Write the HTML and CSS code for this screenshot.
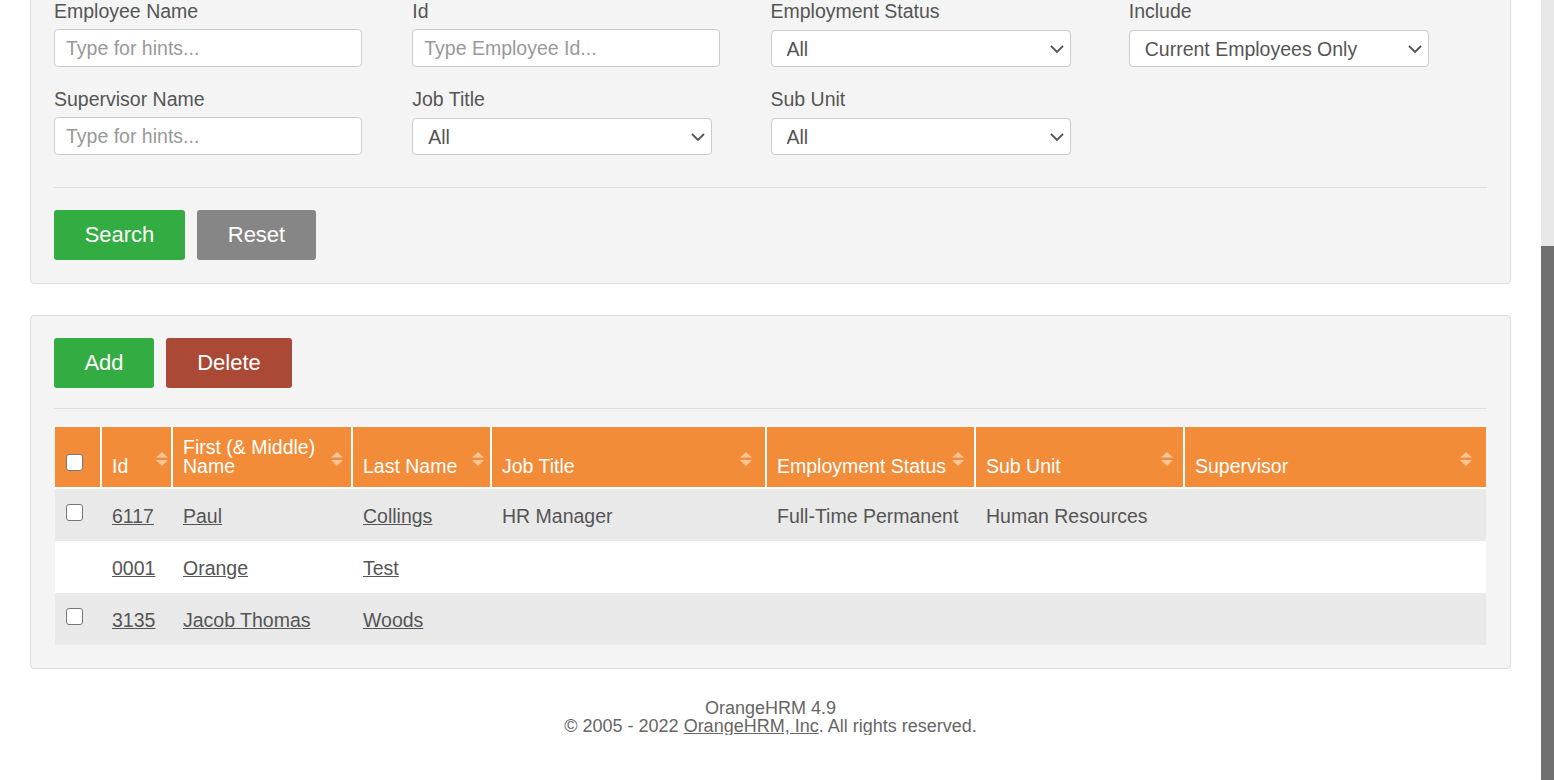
FILE: index.html
```html
<!DOCTYPE html>
<html lang="en">
<head>
<meta charset="utf-8">
<title>Employee List</title>
<link rel="stylesheet" href="styles.css">
</head>
<body>
<div class="page">
  <section class="panel panel-search">
    <div class="filters">
      <div class="field">
        <label class="field-label">Employee Name</label>
        <input class="text-input" type="text" placeholder="Type for hints...">
      </div>
      <div class="field">
        <label class="field-label">Id</label>
        <input class="text-input" type="text" placeholder="Type Employee Id...">
      </div>
      <div class="field">
        <label class="field-label">Employment Status</label>
        <div class="select-wrap">
          <select class="select"><option>All</option></select>
          <svg class="chevron" width="14" height="8" viewBox="0 0 14 8"><path d="M1 1 L7 7 L13 1" fill="none" stroke="#555" stroke-width="1.8"/></svg>
        </div>
      </div>
      <div class="field">
        <label class="field-label">Include</label>
        <div class="select-wrap">
          <select class="select"><option>Current Employees Only</option></select>
          <svg class="chevron" width="14" height="8" viewBox="0 0 14 8"><path d="M1 1 L7 7 L13 1" fill="none" stroke="#555" stroke-width="1.8"/></svg>
        </div>
      </div>
      <div class="field">
        <label class="field-label">Supervisor Name</label>
        <input class="text-input" type="text" placeholder="Type for hints...">
      </div>
      <div class="field">
        <label class="field-label">Job Title</label>
        <div class="select-wrap">
          <select class="select"><option>All</option></select>
          <svg class="chevron" width="14" height="8" viewBox="0 0 14 8"><path d="M1 1 L7 7 L13 1" fill="none" stroke="#555" stroke-width="1.8"/></svg>
        </div>
      </div>
      <div class="field">
        <label class="field-label">Sub Unit</label>
        <div class="select-wrap">
          <select class="select"><option>All</option></select>
          <svg class="chevron" width="14" height="8" viewBox="0 0 14 8"><path d="M1 1 L7 7 L13 1" fill="none" stroke="#555" stroke-width="1.8"/></svg>
        </div>
      </div>
    </div>
    <hr class="divider divider-search">
    <div class="actions">
      <button class="btn btn-green btn-search">Search</button>
      <button class="btn btn-gray btn-reset">Reset</button>
    </div>
  </section>

  <section class="panel panel-list">
    <div class="actions">
      <button class="btn btn-green btn-add">Add</button>
      <button class="btn btn-red btn-delete">Delete</button>
    </div>
    <hr class="divider divider-list">
    <table class="grid">
      <colgroup>
        <col class="c-check"><col class="c-id"><col class="c-first"><col class="c-last"><col class="c-job"><col class="c-status"><col class="c-sub"><col class="c-sup">
      </colgroup>
      <thead>
        <tr>
          <th class="th-check"><input class="check check-head" type="checkbox"></th>
          <th>Id<svg class="sort" width="12" height="14" viewBox="0 0 12 14"><polygon points="0,5.5 6,0 12,5.5"/><polygon points="0,8 12,8 6,14"/></svg></th>
          <th>First (&amp; Middle)<br>Name<svg class="sort" width="12" height="14" viewBox="0 0 12 14"><polygon points="0,5.5 6,0 12,5.5"/><polygon points="0,8 12,8 6,14"/></svg></th>
          <th>Last Name<svg class="sort" width="12" height="14" viewBox="0 0 12 14"><polygon points="0,5.5 6,0 12,5.5"/><polygon points="0,8 12,8 6,14"/></svg></th>
          <th>Job Title<svg class="sort" width="12" height="14" viewBox="0 0 12 14"><polygon points="0,5.5 6,0 12,5.5"/><polygon points="0,8 12,8 6,14"/></svg></th>
          <th>Employment Status<svg class="sort" width="12" height="14" viewBox="0 0 12 14"><polygon points="0,5.5 6,0 12,5.5"/><polygon points="0,8 12,8 6,14"/></svg></th>
          <th>Sub Unit<svg class="sort" width="12" height="14" viewBox="0 0 12 14"><polygon points="0,5.5 6,0 12,5.5"/><polygon points="0,8 12,8 6,14"/></svg></th>
          <th>Supervisor<svg class="sort" width="12" height="14" viewBox="0 0 12 14"><polygon points="0,5.5 6,0 12,5.5"/><polygon points="0,8 12,8 6,14"/></svg></th>
        </tr>
      </thead>
      <tbody>
        <tr>
          <td class="td-check"><input class="check check-row" type="checkbox"></td>
          <td><a href="#">6117</a></td>
          <td><a href="#">Paul</a></td>
          <td><a href="#">Collings</a></td>
          <td>HR Manager</td>
          <td>Full-Time Permanent</td>
          <td>Human Resources</td>
          <td></td>
        </tr>
        <tr>
          <td class="td-check"></td>
          <td><a href="#">0001</a></td>
          <td><a href="#">Orange</a></td>
          <td><a href="#">Test</a></td>
          <td></td>
          <td></td>
          <td></td>
          <td></td>
        </tr>
        <tr>
          <td class="td-check"><input class="check check-row" type="checkbox"></td>
          <td><a href="#">3135</a></td>
          <td><a href="#">Jacob Thomas</a></td>
          <td><a href="#">Woods</a></td>
          <td></td>
          <td></td>
          <td></td>
          <td></td>
        </tr>
      </tbody>
    </table>
  </section>

  <footer class="footer">
    <div>OrangeHRM 4.9</div>
    <div>&copy; 2005 - 2022 <a href="#">OrangeHRM, Inc</a>. All rights reserved.</div>
  </footer>
</div>
<div class="scrollbar"><div class="scroll-thumb"></div></div>
</body>
</html>
```

FILE: styles.css
```css
html {
  overflow: hidden;
}
body {
  margin: 0;
  background: #ffffff;
  font-family: "Liberation Sans", Arial, sans-serif;
  font-size: 19.5px;
  color: #555555;
}
.page {
  width: 1541px;
  box-sizing: border-box;
  padding: 0 30px;
}
.panel {
  background: #f4f4f4;
  border: 1px solid #dedede;
  border-radius: 4px;
  padding: 23px;
}
.panel-search {
  margin-top: -24px;
}
.panel-list {
  margin-top: 31px;
  padding-top: 22px;
  padding-bottom: 23px;
}
.filters {
  display: grid;
  grid-template-columns: repeat(4, 1fr);
  row-gap: 21px;
}
.field {
  display: flex;
  flex-direction: column;
  align-items: flex-start;
}
.field-label {
  display: block;
  line-height: 22px;
  margin-bottom: 7px;
  color: #555555;
}
.text-input {
  box-sizing: border-box;
  width: 308px;
  height: 38px;
  margin: 0;
  border: 1px solid #cccccc;
  border-radius: 4px;
  padding: 0 11px;
  background: #ffffff;
  font-family: inherit;
  font-size: 19.5px;
  color: #555555;
}
.text-input::placeholder {
  color: #999999;
}
.select-wrap {
  position: relative;
  width: 300px;
  margin-top: 1px;
}
.select {
  -webkit-appearance: none;
  appearance: none;
  box-sizing: border-box;
  width: 300px;
  height: 37px;
  margin: 0;
  border: 1px solid #cccccc;
  border-radius: 4px;
  padding: 0 30px 0 15px;
  background: #ffffff;
  font-family: inherit;
  font-size: 19.5px;
  color: #555555;
}
.chevron {
  position: absolute;
  right: 7px;
  top: 15px;
  pointer-events: none;
}
.divider {
  border: 0;
  border-top: 1px solid #dedede;
  margin: 0;
}
.divider-search {
  margin-top: 32px;
  margin-bottom: 22px;
}
.divider-list {
  margin-top: 20px;
  margin-bottom: 18px;
}
.actions {
  display: flex;
  gap: 12px;
}
.btn {
  height: 50px;
  padding: 0;
  border: 0;
  border-radius: 3px;
  color: #ffffff;
  font-family: inherit;
  font-size: 22px;
  text-align: center;
  cursor: pointer;
}
.btn-search { width: 131px; }
.btn-reset { width: 119px; }
.btn-add { width: 100px; }
.btn-delete { width: 126px; }
.btn-green {
  background: #33ac41;
}
.btn-gray {
  background: #868686;
}
.btn-red {
  background: #aa4935;
}
.grid {
  table-layout: fixed;
  width: 1431px;
  margin-left: 1px;
  border-collapse: separate;
  border-spacing: 0;
}
.c-check { width: 47px; }
.c-id { width: 71px; }
.c-first { width: 180px; }
.c-last { width: 139px; }
.c-job { width: 275px; }
.c-status { width: 209px; }
.c-sub { width: 209px; }
.c-sup { width: 301px; }
.grid th {
  position: relative;
  background: #f28c38;
  color: #ffffff;
  font-weight: normal;
  text-align: left;
  vertical-align: bottom;
  line-height: 19px;
  padding: 11px 10px;
  border-right: 2px solid #ffffff;
  border-bottom: 2px solid #ffffff;
  white-space: nowrap;
}
.grid th:last-child {
  border-right: 0;
}
.grid .th-check {
  padding-left: 11px;
}
.sort {
  position: absolute;
  top: 25px;
  left: calc((100% - 12px) * 0.95);
  fill: rgba(255, 255, 255, 0.5);
}
.grid td {
  vertical-align: top;
  line-height: 27px;
  padding: 14px 10px 11px;
  color: #555555;
  white-space: nowrap;
}
.grid tbody tr:nth-child(odd) td {
  background: #e9e9e9;
}
.grid tbody tr:nth-child(even) td {
  background: #ffffff;
}
.grid .td-check {
  padding-left: 11px;
}
.grid a {
  color: #555555;
  text-decoration: underline;
}
.check {
  -webkit-appearance: none;
  appearance: none;
  display: block;
  box-sizing: border-box;
  width: 17px;
  height: 17px;
  margin: 0;
  border: 1px solid #767676;
  border-radius: 3px;
  background: #ffffff;
}
.check-head {
  margin-bottom: 5px;
}
.check-row {
  margin-top: 1px;
}
.footer {
  margin-top: 30px;
  text-align: center;
  font-size: 18px;
  line-height: 18px;
  color: #666666;
}
.footer a {
  color: #666666;
  text-decoration: underline;
}
.scrollbar {
  position: fixed;
  top: 0;
  right: 0;
  bottom: 0;
  width: 13px;
  background: #e8e8e8;
}
.scroll-thumb {
  position: absolute;
  top: 246px;
  left: 0;
  right: 0;
  bottom: 0;
  background: #707070;
}
```
